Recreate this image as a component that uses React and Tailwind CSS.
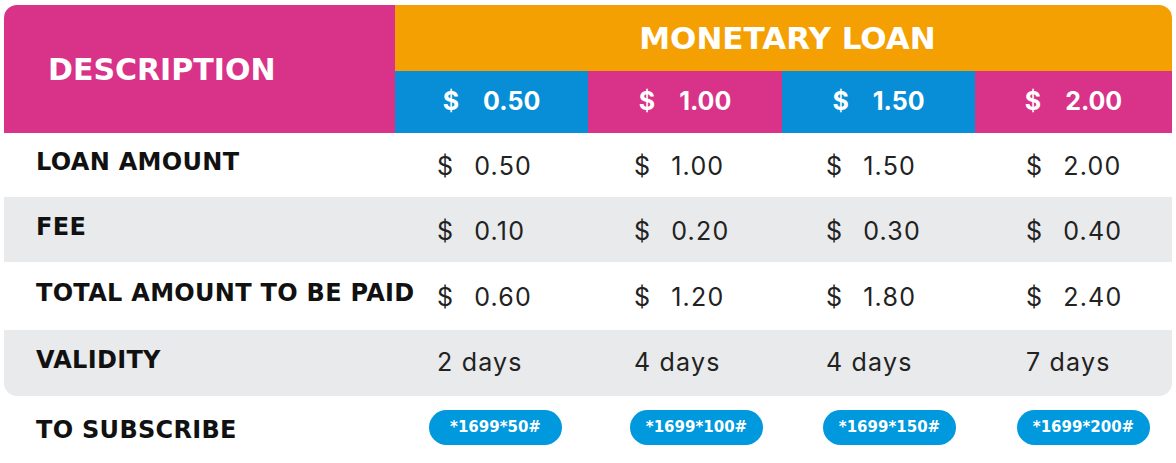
const cols = ['w-[193px]', 'w-[194px]', 'w-[193px]', 'w-[197px]'];

const heads = [
  { v: '0.50', bg: 'bg-[#078ed6]' },
  { v: '1.00', bg: 'bg-[#d83388]' },
  { v: '1.50', bg: 'bg-[#078ed6]' },
  { v: '2.00', bg: 'bg-[#d83388]' },
];

const rows = [
  { label: 'LOAN AMOUNT', vals: ['0.50', '1.00', '1.50', '2.00'], money: true, gray: false, h: 'h-[64px]' },
  { label: 'FEE', vals: ['0.10', '0.20', '0.30', '0.40'], money: true, gray: true, h: 'h-[65px]' },
  { label: 'TOTAL AMOUNT TO BE PAID', vals: ['0.60', '1.20', '1.80', '2.40'], money: true, gray: false, h: 'h-[68px]' },
  { label: 'VALIDITY', vals: ['2 days', '4 days', '4 days', '7 days'], money: false, gray: true, h: 'h-[66px]', last: true },
];

const codes = ['*1699*50#', '*1699*100#', '*1699*150#', '*1699*200#'];
const pads = ['pl-[42px]', 'pl-[46px]', 'pl-[44px]', 'pl-[51px]'];
const pillPads = ['pl-[34px]', 'pl-[42px]', 'pl-[41px]', 'pl-[42px]'];

export default function App() {
  return (
    <div className="w-[1176px] h-[463px] bg-white font-['Inter',sans-serif] text-[#111]">
      <div className="pt-[5px] pl-[4px] w-[1172px]">
        {/* header */}
        <div className="flex">
          <div className="w-[391px] h-[128px] bg-[#d83388] rounded-tl-[13px] flex items-center pl-[44px]">
            <span className="text-white font-bold text-[30px] font-['DejaVu_Sans',sans-serif]">DESCRIPTION</span>
          </div>
          <div className="flex-1 flex flex-col">
            <div className="h-[66px] bg-[#f5a002] rounded-tr-[13px] flex items-center justify-center">
              <span className="text-white font-bold text-[31px] font-['DejaVu_Sans',sans-serif] pl-[8px]">MONETARY LOAN</span>
            </div>
            <div className="flex h-[62px]">
              {heads.map((h, i) => (
                <div key={i} className={`${cols[i]} ${h.bg} flex items-center justify-center text-white font-bold text-[25px]`}>
                  <span className="mr-[24px]">$</span>
                  <span>{h.v}</span>
                </div>
              ))}
            </div>
          </div>
        </div>

        {/* body */}
        {rows.map((r, ri) => (
          <div key={ri} className={`flex ${r.h} ${r.gray ? 'bg-[#e9eaeb]' : ''} ${r.last ? 'rounded-b-[13px]' : ''}`}>
            <div className="w-[391px] pl-[32px] flex items-center pb-[6px]">
              <span className="font-bold text-[24px] text-[#111] whitespace-nowrap font-['DejaVu_Sans',sans-serif] tracking-[0.3px]">{r.label}</span>
            </div>
            {r.vals.map((v, i) => (
              <div key={i} className={`${cols[i]} ${pads[i]} flex items-center text-[25px] tracking-[1.2px] text-[#222] ${r.last ? '' : 'pt-[4px]'}`}>
                {r.money && <span className="mr-[20px]">$</span>}
                <span>{v}</span>
              </div>
            ))}
          </div>
        ))}

        {/* subscribe */}
        <div className="flex h-[67px]">
          <div className="w-[391px] pl-[32px] flex items-center">
            <span className="font-bold text-[24px] text-[#111] font-['DejaVu_Sans',sans-serif] tracking-[0.3px]">TO SUBSCRIBE</span>
          </div>
          {codes.map((c, i) => (
            <div key={i} className={`${cols[i]} flex items-center ${pillPads[i]} pb-[4px]`}>
              <span className="w-[133px] h-[35px] rounded-full bg-[#0099de] text-white font-bold text-[15px] font-['DejaVu_Sans',sans-serif] flex items-center justify-center">
                {c}
              </span>
            </div>
          ))}
        </div>
      </div>
    </div>
  );
}
